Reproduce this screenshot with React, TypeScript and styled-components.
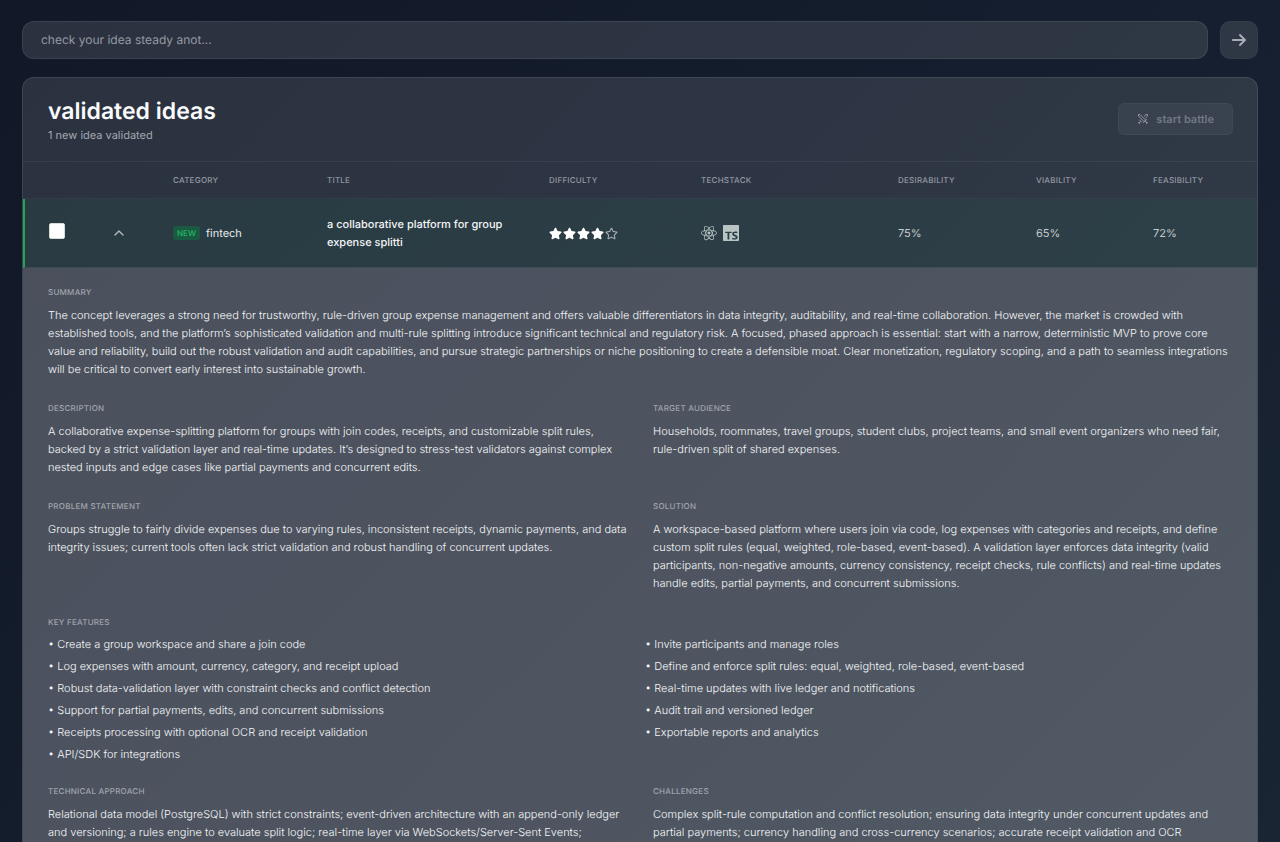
import React from 'react';
import styled, { createGlobalStyle } from 'styled-components';
import { FaStar, FaRegStar } from 'react-icons/fa';
import { FaArrowRight } from 'react-icons/fa6';
import { SiTypescript, SiReact } from 'react-icons/si';
import { ChevronUp, Swords } from 'lucide-react';

const GlobalStyle = createGlobalStyle`
  *, *::before, *::after { box-sizing: border-box; }
  html { background: #1a2433; }
  body {
    margin: 0;
    font-family: Inter, "Liberation Sans", sans-serif;
    color: #e5e7eb;
    background: linear-gradient(135deg, #111827 0%, #151e2e 50%, #1a2534 100%);
    text-rendering: geometricPrecision;
  }
  button, input { font-family: inherit; text-rendering: inherit; }
`;

const Page = styled.main`
  display: flex;
  flex-direction: column;
  gap: 18px;
  padding: 21px 22px;
  min-height: 100vh;
`;

const SearchBar = styled.form`
  display: flex;
  gap: 12px;
  margin: 0;
`;

const SearchInput = styled.input`
  flex: 1;
  min-width: 0;
  height: 38px;
  padding: 0 18px 2px;
  border: 1px solid rgba(255, 255, 255, 0.08);
  border-radius: 12px;
  background: rgba(255, 255, 255, 0.11);
  color: #e5e7eb;
  font-size: 12px;
  outline: none;
  &::placeholder { color: #9499a3; opacity: 1; }
`;

const SubmitButton = styled.button`
  display: flex;
  align-items: center;
  justify-content: center;
  width: 38px;
  height: 38px;
  padding: 0;
  border: 1px solid rgba(255, 255, 255, 0.03);
  border-radius: 10px;
  background: rgba(255, 255, 255, 0.11);
  color: #a7acb4;
`;

const Panel = styled.section`
  overflow: hidden;
  border: 1px solid rgba(255, 255, 255, 0.09);
  border-radius: 12px;
  background: rgba(255, 255, 255, 0.11);
`;

const PanelHeader = styled.header`
  display: flex;
  align-items: center;
  justify-content: space-between;
  height: 83px;
  padding: 0 24px 1px 25px;
`;

const Heading = styled.h1`
  margin: 0;
  color: #fafbfc;
  font-size: 23px;
  font-weight: 600;
  line-height: 32px;
`;

const Subheading = styled.p`
  margin: 0;
  color: #a3a8b1;
  font-size: 11px;
  line-height: 16px;
`;

const BattleButton = styled.button`
  display: flex;
  align-items: center;
  gap: 7px;
  height: 32px;
  padding: 0 18px;
  border: 1px solid rgba(255, 255, 255, 0.04);
  border-radius: 6px;
  background: rgba(255, 255, 255, 0.05);
  color: #727883;
  font-size: 11px;
  font-weight: 600;
  svg { color: #9398a2; }
`;

const Table = styled.table`
  width: 100%;
  table-layout: fixed;
  border-collapse: separate;
  border-spacing: 0;
`;

const HeadCell = styled.th`
  height: 38px;
  padding: 0 24px;
  border-top: 1px solid rgba(255, 255, 255, 0.06);
  border-bottom: 1px solid rgba(255, 255, 255, 0.04);
  color: #9398a2;
  font-size: 8px;
  font-weight: 500;
  letter-spacing: 0.03em;
  text-align: left;
  text-transform: uppercase;
  white-space: nowrap;
`;

const IdeaRow = styled.tr`
  background: rgba(34, 110, 80, 0.15);
`;

const Cell = styled.td<{ $edge?: boolean }>`
  height: 69px;
  padding: 0 20px 0 24px;
  border-left: ${(p) => (p.$edge ? '2px solid #22a558' : '0')};
  border-bottom: 1px solid rgba(255, 255, 255, 0.08);
  color: #c4cacd;
  font-size: 11px;
  line-height: 18px;
`;

const Checkbox = styled.input`
  display: block;
  appearance: none;
  width: 16px;
  height: 16px;
  margin: 0 0 4px;
  border: 1px solid #d5dadb;
  border-radius: 2px;
  background: #ffffff;
`;

const Toggle = styled.button`
  display: flex;
  justify-content: center;
  width: 12px;
  padding: 0;
  border: 0;
  background: none;
  color: #b4bcbf;
  svg { flex: none; }
`;

const Inline = styled.div<{ $gap: number }>`
  display: flex;
  align-items: center;
  gap: ${(p) => p.$gap}px;
`;

const Category = styled.span`
  color: #e8ecee;
  font-size: 11px;
`;

const NewBadge = styled.span`
  padding: 0 4px;
  border-radius: 3px;
  background: #1a5a42;
  color: #25b862;
  font-size: 8px;
  font-weight: 500;
  line-height: 14px;
`;

const IdeaTitle = styled.span`
  color: #f3f5f6;
  font-weight: 500;
`;

const Stars = styled(Inline)`
  color: #ffffff;
  svg:last-child { color: #a5adb0; }
`;

const Tech = styled(Inline)`
  color: #b9c5c5;
`;

const Details = styled.td`
  padding: 18px 24px 24px 25px;
  background: rgba(255, 255, 255, 0.15);
`;

const DetailsGrid = styled.div`
  display: grid;
  grid-template-columns: 1fr 1fr;
  column-gap: 24px;
  row-gap: 22px;
`;

const Block = styled.section<{ $wide?: boolean }>`
  grid-column: ${(p) => (p.$wide ? '1 / -1' : 'auto')};
`;

const Label = styled.h2`
  margin: 0 0 8px;
  color: #a0a5ae;
  font-size: 8px;
  font-weight: 500;
  letter-spacing: 0.03em;
  line-height: 12px;
  text-transform: uppercase;
`;

const Text = styled.p`
  margin: 0 0 2px;
  color: #f6f7f9;
  font-size: 11px;
  font-weight: 300;
  line-height: 18px;
`;

const Features = styled.ul`
  display: grid;
  grid-template-columns: 1fr 1fr;
  column-gap: 8px;
  row-gap: 5px;
  margin: 0;
  padding: 0;
  list-style: none;
`;

const Feature = styled.li`
  color: #f6f7f9;
  font-size: 11px;
  font-weight: 300;
  line-height: 17px;
  &::before { content: "• "; white-space: pre; }
`;

const columns = [
  { width: 66, label: '' },
  { width: 60, label: '' },
  { width: 154, label: 'Category' },
  { width: 222, label: 'Title' },
  { width: 152, label: 'Difficulty' },
  { width: 197, label: 'Techstack' },
  { width: 138, label: 'Desirability' },
  { width: 117, label: 'Viability' },
  { width: 129, label: 'Feasibility' },
];

const features = [
  'Create a group workspace and share a join code',
  'Invite participants and manage roles',
  'Log expenses with amount, currency, category, and receipt upload',
  'Define and enforce split rules: equal, weighted, role-based, event-based',
  'Robust data-validation layer with constraint checks and conflict detection',
  'Real-time updates with live ledger and notifications',
  'Support for partial payments, edits, and concurrent submissions',
  'Audit trail and versioned ledger',
  'Receipts processing with optional OCR and receipt validation',
  'Exportable reports and analytics',
  'API/SDK for integrations',
];

type SectionProps = { label: string; wide?: boolean; children: React.ReactNode };

const Section = ({ label, wide, children }: SectionProps) => (
  <Block $wide={wide}>
    <Label>{label}</Label>
    {children}
  </Block>
);

export default function App() {
  return (
    <>
      <GlobalStyle />
      <Page>
        <SearchBar onSubmit={(e) => e.preventDefault()}>
          <SearchInput type="text" aria-label="Idea" placeholder="check your idea steady anot..." />
          <SubmitButton type="submit" aria-label="Submit idea"><FaArrowRight size={16} /></SubmitButton>
        </SearchBar>
        <Panel>
          <PanelHeader>
            <div>
              <Heading>validated ideas</Heading>
              <Subheading>1 new idea validated</Subheading>
            </div>
            <BattleButton type="button" disabled><Swords size={12} />start battle</BattleButton>
          </PanelHeader>
          <Table>
            <colgroup>
              {columns.map((c, i) => <col key={i} width={c.width} />)}
            </colgroup>
            <thead>
              <tr>{columns.map((c, i) => <HeadCell key={i} scope="col">{c.label}</HeadCell>)}</tr>
            </thead>
            <tbody>
              <IdeaRow>
                <Cell $edge><Checkbox type="checkbox" aria-label="Select idea" /></Cell>
                <Cell><Toggle type="button" aria-label="Collapse" aria-expanded="true"><ChevronUp size={16} /></Toggle></Cell>
                <Cell><Inline $gap={6}><NewBadge>NEW</NewBadge><Category>fintech</Category></Inline></Cell>
                <Cell><IdeaTitle>a collaborative platform for group expense splitti</IdeaTitle></Cell>
                <Cell>
                  <Stars $gap={1} role="img" aria-label="4 of 5">
                    {[1, 2, 3, 4].map((n) => <FaStar key={n} size={13} />)}
                    <FaRegStar size={13} />
                  </Stars>
                </Cell>
                <Cell><Tech $gap={6}><SiReact size={16} /><SiTypescript size={16} /></Tech></Cell>
                <Cell>75%</Cell>
                <Cell>65%</Cell>
                <Cell>72%</Cell>
              </IdeaRow>
              <tr>
                <Details colSpan={9}>
                  <DetailsGrid>
                    <Section label="Summary" wide>
                      <Text>The concept leverages a strong need for trustworthy, rule-driven group expense management and offers valuable differentiators in data integrity, auditability, and real-time collaboration. However, the market is crowded with established tools, and the platform’s sophisticated validation and multi-rule splitting introduce significant technical and regulatory risk. A focused, phased approach is essential: start with a narrow, deterministic MVP to prove core value and reliability, build out the robust validation and audit capabilities, and pursue strategic partnerships or niche positioning to create a defensible moat. Clear monetization, regulatory scoping, and a path to seamless integrations will be critical to convert early interest into sustainable growth.</Text>
                    </Section>
                    <Section label="Description">
                      <Text>A collaborative expense-splitting platform for groups with join codes, receipts, and customizable split rules, backed by a strict validation layer and real-time updates. It’s designed to stress-test validators against complex nested inputs and edge cases like partial payments and concurrent edits.</Text>
                    </Section>
                    <Section label="Target audience">
                      <Text>Households, roommates, travel groups, student clubs, project teams, and small event organizers who need fair, rule-driven split of shared expenses.</Text>
                    </Section>
                    <Section label="Problem statement">
                      <Text>Groups struggle to fairly divide expenses due to varying rules, inconsistent receipts, dynamic payments, and data integrity issues; current tools often lack strict validation and robust handling of concurrent updates.</Text>
                    </Section>
                    <Section label="Solution">
                      <Text>A workspace-based platform where users join via code, log expenses with categories and receipts, and define custom split rules (equal, weighted, role-based, event-based). A validation layer enforces data integrity (valid participants, non-negative amounts, currency consistency, receipt checks, rule conflicts) and real-time updates handle edits, partial payments, and concurrent submissions.</Text>
                    </Section>
                    <Section label="Key features" wide>
                      <Features>{features.map((f) => <Feature key={f}>{f}</Feature>)}</Features>
                    </Section>
                    <Section label="Technical approach">
                      <Text>Relational data model (PostgreSQL) with strict constraints; event-driven architecture with an append-only ledger and versioning; a rules engine to evaluate split logic; real-time layer via WebSockets/Server-Sent Events;</Text>
                    </Section>
                    <Section label="Challenges">
                      <Text>Complex split-rule computation and conflict resolution; ensuring data integrity under concurrent updates and partial payments; currency handling and cross-currency scenarios; accurate receipt validation and OCR</Text>
                    </Section>
                  </DetailsGrid>
                </Details>
              </tr>
            </tbody>
          </Table>
        </Panel>
      </Page>
    </>
  );
}
